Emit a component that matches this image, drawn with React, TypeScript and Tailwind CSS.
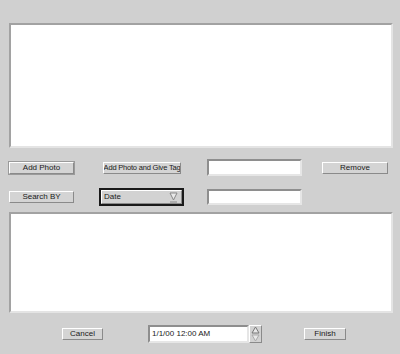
import React from "react";

const font = { fontFamily: '"Liberation Sans", Arial, sans-serif' };

function Btn({ label, w, ml, def, small }: { label: string; w: number; ml: number; def?: boolean; small?: boolean }) {
  const inner = (
    <div
      className={
        "h-[12px] flex items-center justify-center whitespace-nowrap overflow-hidden leading-none text-[#1a1a1a] bg-[#d4d4d4] border border-t-white border-l-white border-b-[#8a8a8a] border-r-[#8a8a8a] " +
        (small ? "text-[7.5px] tracking-[-0.2px]" : "text-[8px]")
      }
      style={{ width: def ? w - 2 : w }}
    >
      {label}
    </div>
  );
  if (def) {
    return (
      <div className="border border-[#9a9a9a] shrink-0" style={{ marginLeft: ml }}>
        {inner}
      </div>
    );
  }
  return (
    <div className="shrink-0" style={{ marginLeft: ml }}>
      {inner}
    </div>
  );
}

function Field({ w, ml, h }: { w: number; ml: number; h: number }) {
  return (
    <div
      className="shrink-0 bg-white border-2 border-t-[#8e8e8e] border-l-[#8e8e8e] border-b-[#e6e6e6] border-r-[#e6e6e6]"
      style={{ width: w, height: h, marginLeft: ml }}
    />
  );
}

export default function App() {
  return (
    <div className="w-[400px] h-[354px] bg-[#d0d0d0] overflow-hidden flex flex-col" style={font}>
      <div className="mt-[23px] ml-[9px] w-[384px] h-[125px] bg-white border-2 border-t-[#a2a2a2] border-l-[#a2a2a2] border-b-[#e4e4e4] border-r-[#e4e4e4]" />

      <div className="mt-[11px] h-[17px] flex items-center">
        <Btn label="Add Photo" w={67} ml={8} def />
        <Btn label="Add Photo and Give Tag" w={78} ml={28} small />
        <Field w={95} ml={26} h={17} />
        <Btn label="Remove" w={66} ml={20} />
      </div>

      <div className="mt-[12px] h-[18px] flex items-center">
        <Btn label="Search BY" w={65} ml={9} />
        <div className="ml-[25px] w-[85px] h-[18px] shrink-0 bg-[#1a1a1a] p-[2px]">
          <div className="w-full h-full bg-[#d2d2d2] border border-t-white border-l-white border-b-[#8a8a8a] border-r-[#8a8a8a] flex items-center justify-between pl-[2px] pr-[3px]">
            <span className="text-[8px] leading-none text-[#1a1a1a]">Date</span>
            <svg width="9" height="11" viewBox="0 0 9 11">
              <path d="M1 1 L8 1 L4.5 8 Z" fill="#e8e8e8" stroke="#888" strokeWidth="1" />
              <line x1="1" y1="10" x2="8" y2="10" stroke="#888" strokeWidth="1" />
            </svg>
          </div>
        </div>
        <Field w={95} ml={23} h={16} />
      </div>

      <div className="mt-[6px] ml-[9px] w-[384px] h-[101px] bg-white border-2 border-t-[#a2a2a2] border-l-[#a2a2a2] border-b-[#e4e4e4] border-r-[#e4e4e4]" />

      <div className="mt-[12px] h-[18px] flex items-center">
        <Btn label="Cancel" w={41} ml={62} />
        <div className="ml-[45px] flex items-center shrink-0">
          <div className="w-[101px] h-[18px] bg-white border-2 border-t-[#8e8e8e] border-l-[#8e8e8e] border-b-[#e6e6e6] border-r-[#e6e6e6] flex items-center pl-[2px]">
            <span className="text-[8px] leading-none text-[#1a1a1a]">1/1/00 12:00 AM</span>
          </div>
          <div className="w-[13px] h-[18px] flex flex-col bg-[#d2d2d2] border border-t-white border-l-white border-b-[#8a8a8a] border-r-[#8a8a8a]">
            <svg width="11" height="16" viewBox="0 0 11 16">
              <path d="M5.5 1 L9 7 L2 7 Z" fill="#e8e8e8" stroke="#777" strokeWidth="1" />
              <path d="M5.5 15 L9 9 L2 9 Z" fill="#e8e8e8" stroke="#aaa" strokeWidth="1" />
            </svg>
          </div>
        </div>
        <Btn label="Finish" w={42} ml={42} />
      </div>
    </div>
  );
}
